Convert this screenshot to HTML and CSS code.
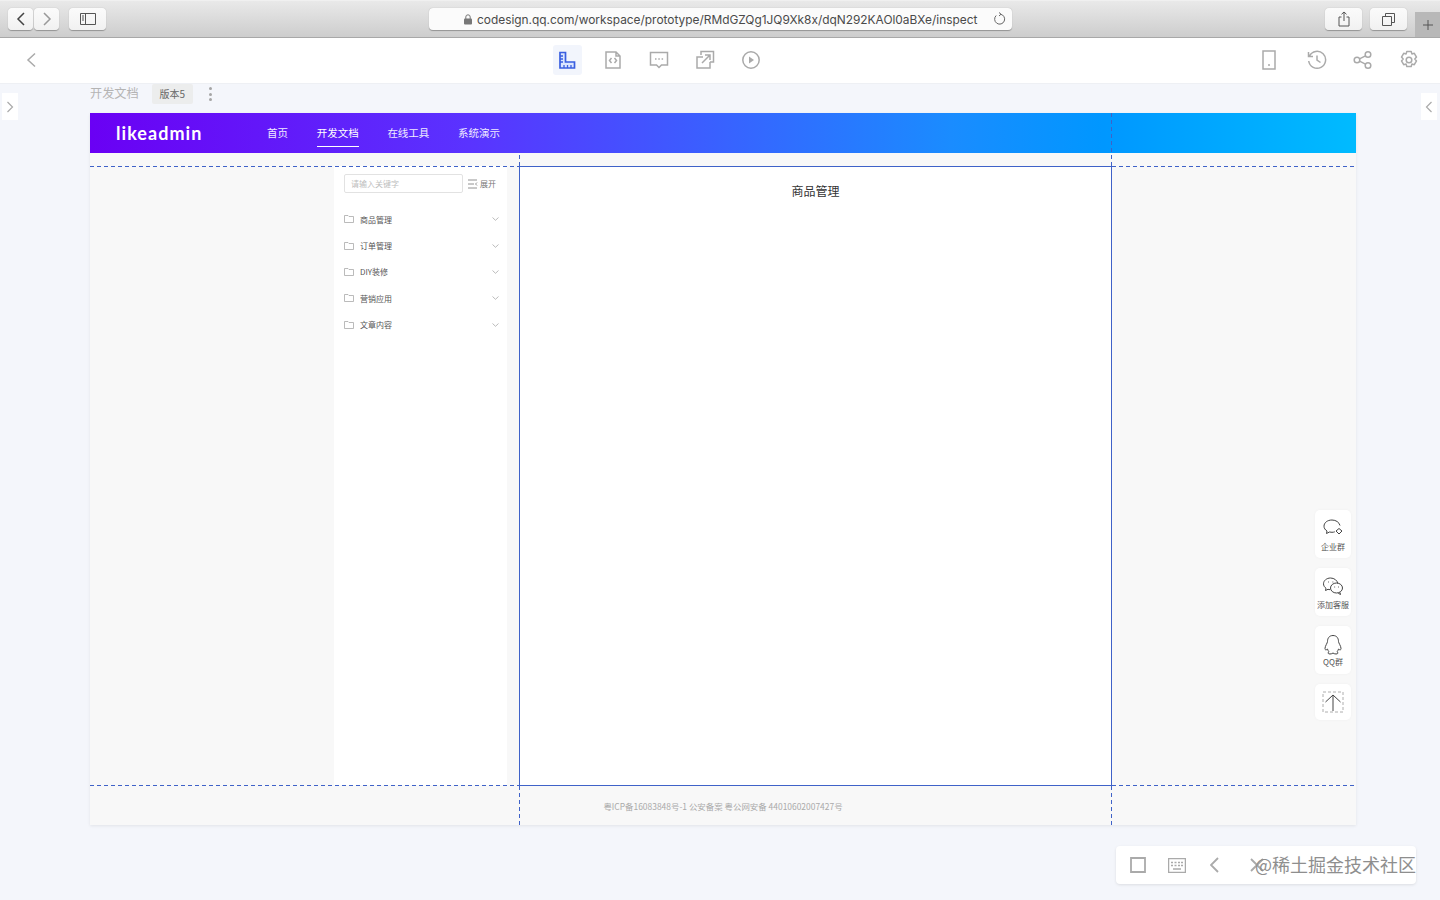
FILE: index.html
```html
<!DOCTYPE html>
<html lang="zh-CN">
<head>
<meta charset="utf-8">
<title>CoDesign</title>
<link rel="stylesheet" href="styles.css">
</head>
<body>
<header class="safari">
  <div class="seg">
    <button class="sbtn sbtn-nav"><svg width="12" height="16" viewBox="0 0 12 16"><path d="M9 2 3 8l6 6" class="ic-dark"/></svg></button>
    <button class="sbtn sbtn-nav"><svg width="12" height="16" viewBox="0 0 12 16"><path d="M3 2l6 6-6 6" class="ic-mid"/></svg></button>
  </div>
  <button class="sbtn sbtn-side"><svg width="16" height="12" viewBox="0 0 16 12"><path d="M.5.5h15v11H.5zM5.5.5v11" class="ic-thin"/><path d="M2 3h2M2 5h2M2 7h2" class="ic-thin"/></svg></button>
  <div class="url">
    <svg class="lock" width="8" height="11" viewBox="0 0 8 11"><rect x="0" y="4.500" width="8" height="6" rx="1" fill="#777"/><path d="M1.800 5V3a2.200 2.200 0 0 1 4.400 0v2" fill="none" stroke="#777"/></svg>
    <span class="url-text">codesign.qq.com/workspace/prototype/RMdGZQg1JQ9Xk8x/dqN292KAOl0aBXe/inspect</span>
    <svg class="reload" width="13" height="14" viewBox="0 0 13 14"><path d="M7.500 2.200a5 5 0 1 1-4.300 1.300M6 .5l2 1.700-2 1.800" fill="none" stroke="#666" stroke-width="1"/></svg>
  </div>
  <button class="sbtn sbtn-share"><svg width="12" height="16" viewBox="0 0 12 16"><path d="M3.500 6H1v9h10V6H8.500M6 10V1M3.500 3.300 6 1l2.500 2.300" class="ic-thin"/></svg></button>
  <button class="sbtn sbtn-tabs"><svg width="13" height="13" viewBox="0 0 13 13"><path d="M.5 3.500h9v9h-9zM3.500 3.500v-3h9v9h-3" class="ic-thin"/></svg></button>
  <div class="plus"><svg width="12" height="12" viewBox="0 0 12 12"><path d="M6 1v10M1 6h10" stroke="#555" fill="none"/></svg></div>
</header>

<nav class="tools">
  <svg class="back" width="20" height="20" viewBox="0 0 20 20"><path d="M13 3.500 6 10l7 6.500" class="tl"/></svg>
  <div class="tool-group">
    <span class="tool tool-on"><svg width="18" height="18" viewBox="0 0 18 18"><path d="M2 1.500h5.500v9.500h9v6H2z" fill="#dbe6ff" stroke="#3a5fe0" stroke-width="1.700"/><path d="M2 5h3M2 8h3M2 11h3M6 17v-3M9.500 17v-3M13 17v-3" stroke="#3a5fe0" stroke-width="1.300"/></svg></span>
    <span class="tool"><svg width="18" height="18" viewBox="0 0 18 18"><path d="M2 1h10l4 4v12H2zM12 1v4h4" class="tl"/><path d="M7.500 7 5.500 9.500l2 2.500M10.500 7l2 2.500-2 2.500" class="tl"/></svg></span>
    <span class="tool"><svg width="20" height="18" viewBox="0 0 20 18"><path d="M1.500 1.500h17v12.500h-6L10 16.500 7.500 14h-6z" class="tl"/><path d="M6 8h1.500M9.300 8h1.500M12.600 8h1.500" class="tl"/></svg></span>
    <span class="tool"><svg width="20" height="20" viewBox="0 0 20 20"><path d="M8 7H2v11h13v-6" class="tl"/><path d="M6 5V1.500h12.500V12H15M7 13 15 5M10 5h5v5" class="tl"/></svg></span>
    <span class="tool"><svg width="20" height="20" viewBox="0 0 20 20"><circle cx="10" cy="10" r="8.200" class="tl"/><path d="M8 6.500 13 10l-5 3.500z" fill="#aaa"/></svg></span>
  </div>
  <div class="tool-right">
    <span class="tool-r tool-r-phone"><svg width="14" height="20" viewBox="0 0 14 20"><path d="M1 1h12v18H1z" class="tl"/><circle cx="7" cy="15" r="1" fill="#aaa"/></svg></span>
    <span class="tool-r"><svg width="20" height="20" viewBox="0 0 20 20"><path d="M2.500 6a8.500 8.500 0 1 1-.8 5M1.500 2v4.500H6M10 5.500V10l3.500 2.500" class="tl"/></svg></span>
    <span class="tool-r"><svg width="20" height="20" viewBox="0 0 20 20"><circle cx="4" cy="10" r="2.800" class="tl"/><circle cx="15" cy="4.500" r="2.800" class="tl"/><circle cx="15" cy="15.500" r="2.800" class="tl"/><path d="M6.500 8.800 12.500 5.800M6.500 11.200l6 3" class="tl"/></svg></span>
    <span class="tool-r"><svg width="20" height="20" viewBox="0 0 20 20"><path d="M7.800 1.500h4.400l.7 2.400 2.400-.6 2.200 3.800-1.700 1.900 1.700 1.900-2.200 3.800-2.400-.6-.7 2.400H7.800l-.7-2.400-2.400.6-2.200-3.800 1.700-1.900-1.700-1.900 2.200-3.800 2.400.6z" class="tl" stroke-linejoin="round"/><circle cx="10" cy="10" r="2.800" class="tl"/></svg></span>
  </div>
</nav>

<main class="stage">
  <span class="edge edge-left"><svg width="8" height="12" viewBox="0 0 8 12"><path d="M1.500 1 6.500 6l-5 5" class="edge-ic"/></svg></span>
  <span class="edge edge-right"><svg width="8" height="12" viewBox="0 0 8 12"><path d="M6.500 1 1.500 6l5 5" class="edge-ic"/></svg></span>

  <div class="title-row">
    <span class="page-name">开发文档</span>
    <span class="version">版本5</span>
    <span class="dots"><i></i><i></i><i></i></span>
  </div>

  <section class="frame">
    <div class="site-head">
      <span class="logo">likeadmin</span>
      <div class="site-nav">
        <a>首页</a>
        <a class="active">开发文档</a>
        <a>在线工具</a>
        <a>系统演示</a>
      </div>
    </div>
    <div class="site-body">
      <aside class="tree">
        <div class="search">
          <span class="search-input">请输入关键字</span>
          <svg width="10" height="10" viewBox="0 0 10 10"><path d="M0 1h9M0 5h6M0 9h9M9 3.500 7.500 5 9 6.500" class="thin"/></svg>
          <span class="expand">展开</span>
        </div>
        <ul class="tree-list">
          <li><svg class="folder" width="10" height="8" viewBox="0 0 10 8"><path d="M.5.500h3.500l1 1h4.500v6H.5z" class="folder-ic"/></svg><span>商品管理</span><svg class="chev" width="7" height="4" viewBox="0 0 7 4"><path d="M.5.500l3 2.800 3-2.800" class="folder-ic"/></svg></li>
          <li><svg class="folder" width="10" height="8" viewBox="0 0 10 8"><path d="M.5.500h3.500l1 1h4.500v6H.5z" class="folder-ic"/></svg><span>订单管理</span><svg class="chev" width="7" height="4" viewBox="0 0 7 4"><path d="M.5.500l3 2.800 3-2.800" class="folder-ic"/></svg></li>
          <li><svg class="folder" width="10" height="8" viewBox="0 0 10 8"><path d="M.5.500h3.500l1 1h4.500v6H.5z" class="folder-ic"/></svg><span>DIY装修</span><svg class="chev" width="7" height="4" viewBox="0 0 7 4"><path d="M.5.500l3 2.800 3-2.800" class="folder-ic"/></svg></li>
          <li><svg class="folder" width="10" height="8" viewBox="0 0 10 8"><path d="M.5.500h3.500l1 1h4.500v6H.5z" class="folder-ic"/></svg><span>营销应用</span><svg class="chev" width="7" height="4" viewBox="0 0 7 4"><path d="M.5.500l3 2.800 3-2.800" class="folder-ic"/></svg></li>
          <li><svg class="folder" width="10" height="8" viewBox="0 0 10 8"><path d="M.5.500h3.500l1 1h4.500v6H.5z" class="folder-ic"/></svg><span>文章内容</span><svg class="chev" width="7" height="4" viewBox="0 0 7 4"><path d="M.5.500l3 2.800 3-2.800" class="folder-ic"/></svg></li>
        </ul>
      </aside>
      <article class="content"><h1>商品管理</h1></article>
    </div>
    <footer class="site-foot">粤ICP备16083848号-1 公安备案 粤公网安备 44010602007427号</footer>

    <i class="guide h h1"></i><i class="guide h h2"></i><i class="guide h h3"></i><i class="guide h h4"></i>
    <i class="guide v v1"></i><i class="guide v v2"></i><i class="guide v v3"></i><i class="guide v v4"></i>

    <div class="floats">
      <div class="float">
        <svg width="22" height="20" viewBox="0 0 22 20"><path d="M10 2C5.300 2 2 4.800 2 8.200c0 2 1.200 3.700 3 4.800l-.5 2.500 3-1.500c.8.200 1.600.3 2.500.3 1 0 2-.2 2.800-.5M18 7.500C17.200 4.300 14 2 10 2" class="fl"/><path d="M17 10.500l3 2.500-3 3-3-3z" class="fl"/></svg>
        <span>企业群</span>
      </div>
      <div class="float">
        <svg width="22" height="20" viewBox="0 0 22 20"><path d="M8.500 2C4.700 2 1.500 4.600 1.500 7.800c0 1.800 1 3.400 2.500 4.500L3.500 14.500l2.500-1.200c.6.200 1.300.3 2 .4" class="fl"/><path d="M15.800 7.500C15.300 4.400 12.200 2 8.500 2" class="fl"/><ellipse cx="14.500" cy="12" rx="6" ry="5" class="fl"/><path d="M18 16.500l.5 2-2.200-1.200" class="fl"/><path d="M6 6h.8M10.500 6h.8M12.300 11h.8M16 11h.8" class="fl"/></svg>
        <span>添加客服</span>
      </div>
      <div class="float">
        <svg width="20" height="22" viewBox="0 0 20 22"><path d="M10 1.500c-3.800 0-5.500 2.800-5.500 6 0 1.500-2.500 4.500-2.500 7 0 1.500.8 1.800 2.500.6.300 1.200 1 2.100 1.500 2.600-1.500.8-1.300 2.300 1 2.300 1.300 0 2.300-.5 3-1 .7.500 1.700 1 3 1 2.300 0 2.500-1.500 1-2.300.5-.5 1.200-1.400 1.500-2.600 1.700 1.200 2.500.9 2.500-.6 0-2.500-2.500-5.500-2.500-7 0-3.200-1.700-6-5.500-6z" class="fl"/></svg>
        <span class="float-qq">QQ群</span>
      </div>
      <div class="float float-top">
        <svg width="22" height="22" viewBox="0 0 22 22"><path d="M1 1h20v20H1z" class="dash"/><path d="M11 4v16M3.500 11 11 4l7.500 7" class="fl"/></svg>
      </div>
    </div>
  </section>

  <div class="dock">
    <svg width="16" height="16" viewBox="0 0 16 16"><path d="M1 1h14v14H1z" class="dock-ic"/></svg>
    <svg class="dock-kb" width="18" height="15" viewBox="0 0 18 15"><path d="M.5.500h17v14H.5z" class="tl"/><path d="M3 4.500h2M6.500 4.500h2M10 4.500h2M13 4.500h2M3 7.500h2M6.500 7.500h2M10 7.500h2M13 7.500h2M5 11h8" class="tl"/></svg>
    <svg class="dock-ch" width="9" height="16" viewBox="0 0 9 16"><path d="M8 1 1 8l7 7" class="dock-ic"/></svg>
    <svg class="dock-x" width="14" height="14" viewBox="0 0 14 14"><path d="M1 1l12 12M13 1 1 13" class="dock-ic"/></svg>
    <span class="watermark">@稀土掘金技术社区</span>
  </div>
</main>
</body>
</html>
```
FILE: styles.css
```css
* { box-sizing: border-box; }
html, body { margin: 0; height: 100%; }
body {
  width: 1440px;
  height: 900px;
  overflow: hidden;
  display: flex;
  flex-direction: column;
  background: #f4f6fb;
  font-family: "Noto Sans CJK SC", "Noto Sans", sans-serif;
  color: #333;
}
ul { list-style: none; margin: 0; padding: 0; }
i { display: block; }

/* browser chrome */
.safari {
  height: 38px;
  flex: none;
  display: flex;
  padding: 7px 0 0 8px;
  background: linear-gradient(#e9e9e9, #cdcdcd);
  border-top: 1px solid #f0f0f0;
  border-bottom: 1px solid #a8a8a8;
  position: relative;
}
.seg { display: flex; gap: 1px; }
.sbtn {
  height: 22px;
  padding: 0;
  border: 0;
  border-radius: 4px;
  background: linear-gradient(#fbfbfb, #f1f1f1);
  box-shadow: 0 .5px 1px rgba(0,0,0,.3);
  display: flex;
  align-items: center;
  justify-content: center;
}
.sbtn-nav { width: 25px; }
.sbtn-side { width: 37px; margin-left: 10px; }
.sbtn-share { width: 37px; margin-left: 313px; }
.sbtn-tabs { width: 37px; margin-left: 8px; }
.ic-dark { fill: none; stroke: #444; stroke-width: 1.500; }
.ic-mid { fill: none; stroke: #999; stroke-width: 1.500; }
.ic-thin { fill: none; stroke: #555; stroke-width: 1; }
.url {
  width: 583px;
  height: 22px;
  margin-left: 323px;
  padding-left: 35px;
  display: flex;
  align-items: center;
  background: #fbfbfb;
  border-radius: 4px;
  box-shadow: 0 .5px 1px rgba(0,0,0,.3);
}
.lock { flex: none; }
.url-text {
  margin-left: 5px;
  font: 11.900px/22px Inter, sans-serif;
  color: #4a4a4a;
  white-space: nowrap;
  position: relative;
  top: 1px;
}
.reload { margin-left: 16px; flex: none; }
.plus {
  position: absolute;
  right: 0;
  bottom: 0;
  width: 25px;
  height: 25px;
  background: #b8b8b8;
  display: flex;
  align-items: center;
  justify-content: center;
}

/* tool row */
.tools {
  height: 46px;
  flex: none;
  background: #fff;
  border-bottom: 1px solid #eef0f4;
  display: flex;
  align-items: center;
  padding: 0 0 1px 22px;
}
.tl { fill: none; stroke: #aaa; stroke-width: 1.500; }
.tool-group { display: flex; margin-left: 502px; }
.tool {
  width: 46px;
  height: 30px;
  display: flex;
  align-items: center;
  justify-content: center;
  position: relative;
}
.tool-on::before {
  content: "";
  position: absolute;
  left: 9px;
  top: 0;
  width: 29px;
  height: 30px;
  border-radius: 3px;
  background: #f2f5fc;
}
.tool-on svg { position: relative; }
.tool-right { display: flex; margin-left: 470px; }
.tool-r {
  width: 46px;
  height: 30px;
  display: flex;
  align-items: center;
  justify-content: center;
}
.tool-r-phone { width: 50px; }

/* stage */
.stage {
  flex: 1;
  position: relative;
  padding: 0 84px 0 90px;
}
.edge {
  position: absolute;
  top: 9px;
  width: 16px;
  height: 27px;
  background: #fff;
  display: flex;
  align-items: center;
  justify-content: center;
}
.edge-left { left: 2px; }
.edge-right { right: 3px; }
.edge-ic { fill: none; stroke: #aaa; stroke-width: 1.200; }

.title-row {
  height: 29px;
  display: flex;
  align-items: flex-start;
}
.page-name {
  font-size: 12.200px;
  line-height: 18px;
  color: #b4b4b4;
}
.version {
  margin-left: 13px;
  width: 41px;
  height: 20px;
  background: #eceded;
  border-radius: 2px;
  font-size: 10px;
  line-height: 20px;
  text-align: center;
  color: #666;
}
.dots {
  margin: 3px 0 0 16px;
  width: 4px;
  display: flex;
  flex-direction: column;
  gap: 2.500px;
}
.dots i { width: 3px; height: 3px; border-radius: 50%; background: #a5a5a5; }

/* design frame */
.frame {
  position: relative;
  width: 1266px;
  height: 712px;
  display: flex;
  flex-direction: column;
  background: #f8f8f8;
  box-shadow: 0 1px 3px rgba(0,0,0,.08);
}
.site-head {
  height: 40px;
  flex: none;
  display: flex;
  align-items: stretch;
  padding-left: 26px;
  background: linear-gradient(90deg, #6a00f4 0%, #5a33ff 30%, #1a8cff 68%, #0097ff 80%, #00bbff 100%);
}
.logo {
  width: 151px;
  font: 700 18px/40px Lato, sans-serif;
  color: #fff;
  letter-spacing: 1.050px;
}
.site-nav { display: flex; gap: 28.700px; }
.site-nav a {
  font-size: 10.500px;
  line-height: 40px;
  color: #f0ecff;
  height: 34px;
}
.site-nav .active { border-bottom: 1.500px solid #fff; color: #fff; }

.site-body {
  flex: 1;
  display: flex;
  padding: 13px 0 0 244px;
  min-height: 0;
}
.tree {
  width: 173px;
  background: #fff;
  padding: 8px 0 0 10px;
}
.search {
  display: flex;
  align-items: center;
}
.search-input {
  width: 119px;
  height: 19px;
  border: 1px solid #e2e2e2;
  border-radius: 2px;
  font-size: 8px;
  line-height: 17px;
  padding-left: 6px;
  color: #bdbdbd;
  margin-right: 5px;
}
.thin { fill: none; stroke: #777; stroke-width: .8; }
.expand { font-size: 8px; color: #777; margin-left: 2px; }
.tree-list { margin-top: 13px; }
.tree-list li {
  height: 26.400px;
  display: flex;
  align-items: center;
  font-size: 8px;
  color: #555;
}
.tree-list span { margin-left: 6px; flex: 1; }
.folder { flex: none; }
.chev { margin-right: 8px; flex: none; }
.folder-ic { fill: none; stroke: #aaa; stroke-width: .8; }

.content {
  width: 593px;
  height: 620px;
  margin-left: 12px;
  background: #fff;
  border: 1px solid #3f62c8;
}
.content h1 {
  margin: 16px 0 0;
  font-size: 12px;
  font-weight: 400;
  line-height: 16px;
  text-align: center;
  color: #333;
}
.site-foot {
  height: 40px;
  flex: none;
  font-size: 8.450px;
  line-height: 43px;
  text-align: center;
  color: #aaa;
}

/* inspector guides over the design */
.guide { position: absolute; }
.guide.h { height: 1px; background: repeating-linear-gradient(90deg, #3f62c8 0 4px, transparent 4px 7px); }
.guide.v { width: 1px; background: repeating-linear-gradient(180deg, #3f62c8 0 4px, transparent 4px 7px); }
.h1 { left: 0; top: 53px; width: 429px; }
.h2 { left: 1022px; top: 53px; width: 244px; }
.h3 { left: 0; top: 672px; width: 429px; }
.h4 { left: 1022px; top: 672px; width: 244px; }
.v1 { left: 429px; top: 42px; height: 11px; }
.v2 { left: 429px; top: 673px; height: 39px; }
.v3 { left: 1021px; top: 0; height: 53px; }
.v4 { left: 1021px; top: 673px; height: 39px; }

.floats {
  position: absolute;
  left: 1225px;
  top: 397px;
  display: flex;
  flex-direction: column;
  gap: 10px;
}
.float {
  width: 36px;
  height: 48px;
  background: #fff;
  border-radius: 5px;
  display: flex;
  flex-direction: column;
  align-items: center;
  padding-top: 8px;
  font-size: 8px;
  line-height: 11px;
  color: #555;
  white-space: nowrap;
  box-shadow: 0 0 3px rgba(0,0,0,.04);
}
.float span { margin-top: 3px; }
.float .float-qq { margin-top: 0; }
.float-top { height: 36px; padding-top: 7px; }
.fl { fill: none; stroke: #444; stroke-width: 1; }
.dash { fill: none; stroke: #999; stroke-width: .8; stroke-dasharray: 3 2; }

/* bottom dock */
.dock {
  position: absolute;
  left: 1116px;
  top: 762px;
  width: 300px;
  height: 38px;
  background: #fff;
  border-radius: 4px;
  box-shadow: 0 1px 3px rgba(0,0,0,.1);
  display: flex;
  align-items: center;
  padding-left: 14px;
}
.dock-ic { fill: none; stroke: #aaa; stroke-width: 1.800; }
.dock-kb { margin-left: 22px; }
.dock-ch { margin-left: 24px; }
.dock-x { margin-left: 31px; }
.watermark {
  position: absolute;
  right: 0;
  top: 4px;
  font-size: 18px;
  line-height: 28px;
  color: #8e8e8e;
  white-space: nowrap;
}
```
